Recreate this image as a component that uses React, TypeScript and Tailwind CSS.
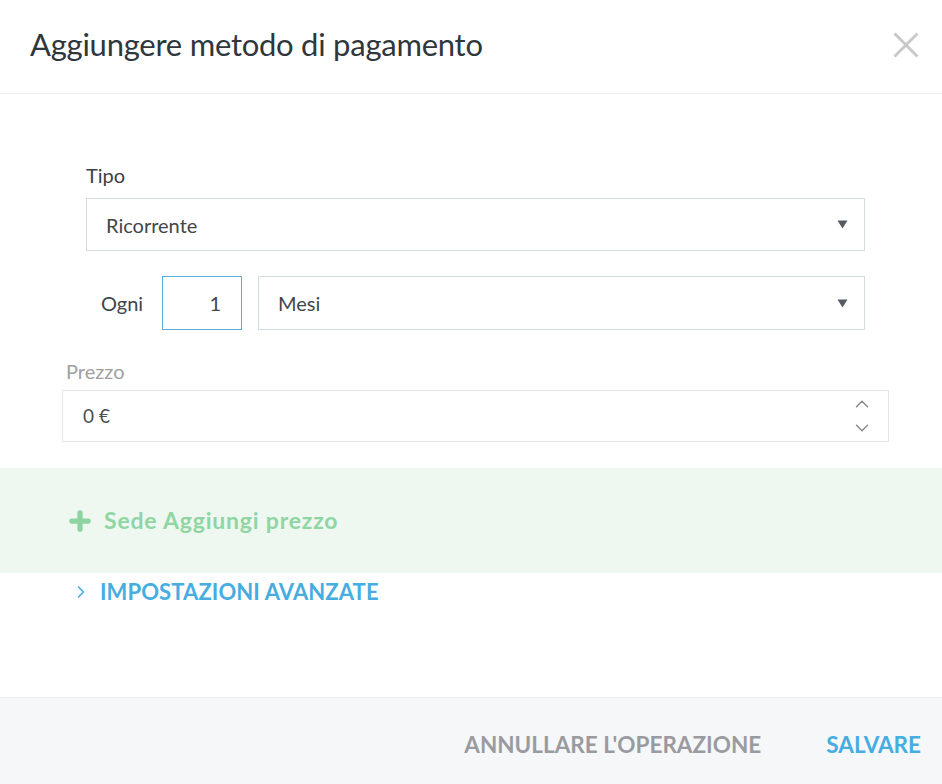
import { Plus, ChevronRight, ChevronUp, ChevronDown } from 'lucide-react';

const font = { fontFamily: 'Lato, "Open Sans", sans-serif' };

const Caret = () => (
  <svg width="11" height="9" viewBox="0 0 11 9" className="shrink-0">
    <path d="M0.5 0.5h10L5.5 8.5z" fill="#555b60" />
  </svg>
);

const App = () => {
  return (
    <div className="w-[942px] h-[784px] bg-white flex flex-col text-[#30373d]" style={font}>
      {/* Header */}
      <div className="h-[94px] shrink-0 flex items-center justify-between pl-[30px] pr-[23px] border-b border-[#efefef]">
        <h1 className="text-[31px] font-normal tracking-[-0.25px] text-[#2f363c] -mt-[4px]">Aggiungere metodo di pagamento</h1>
        <svg width="26" height="26" viewBox="0 0 26 26" className="-mt-[4px]">
          <path d="M1.5 1.5l23 23M24.5 1.5l-23 23" stroke="#c9c9c9" strokeWidth="3" />
        </svg>
      </div>

      {/* Tipo / Ogni */}
      <div className="pl-[86px] pr-[77px] pt-[69px]">
        <label className="block text-[20px] leading-[24px] text-[#3a4147]">Tipo</label>
        <div className="mt-[11px] h-[53px] border border-[#d3dde0] flex items-center justify-between pl-[19px] pr-[16px]">
          <span className="text-[20px] text-[#3f464c]">Ricorrente</span>
          <Caret />
        </div>
        <div className="mt-[25px] flex items-center">
          <span className="w-[76px] pl-[15px] text-[20px] text-[#3f464c]">Ogni</span>
          <div className="w-[80px] h-[54px] border border-[#5aaede] flex items-center justify-end pr-[20px] text-[20px] text-[#3f464c]">
            1
          </div>
          <div className="ml-[16px] flex-1 h-[54px] border border-[#d3dde0] flex items-center justify-between pl-[19px] pr-[16px]">
            <span className="text-[20px] text-[#3f464c]">Mesi</span>
            <Caret />
          </div>
        </div>
      </div>

      {/* Prezzo */}
      <div className="pl-[62px] pr-[53px] pt-[29px]">
        <label className="block pl-[4px] text-[20px] leading-[24px] text-[#a1a1a1]">Prezzo</label>
        <div className="mt-[7px] h-[52px] border border-[#e6e6e6] flex items-center justify-between pl-[20px] pr-[15px]">
          <span className="text-[19px] text-[#4a5157]">0 €</span>
          <div className="flex flex-col items-center gap-[2px] text-[#8a8a8a]">
            <ChevronUp size={22} strokeWidth={1.6} />
            <ChevronDown size={22} strokeWidth={1.6} />
          </div>
        </div>
      </div>

      {/* Aggiungi prezzo */}
      <div className="mt-[26px] h-[105px] bg-[#eef8f1] flex items-center pl-[66px] gap-[10px]">
        <Plus size={28} strokeWidth={4.5} className="text-[#8dd4a1]" />
        <span className="text-[23px] font-bold tracking-[0.8px] text-[#8fd6a3]">Sede Aggiungi prezzo</span>
      </div>

      {/* Impostazioni avanzate */}
      <div className="pl-[71px] pt-[2px] flex items-center gap-[9px] text-[#47ade1]">
        <ChevronRight size={20} strokeWidth={2} />
        <span className="text-[22px] font-bold tracking-[0.1px]">IMPOSTAZIONI AVANZATE</span>
      </div>

      {/* Footer */}
      <div className="mt-auto h-[87px] shrink-0 bg-[#f6f7f9] border-t border-[#efefef] flex items-center justify-end pr-[21px] pt-[8px] gap-[65px]">
        <span className="text-[22.5px] font-bold text-[#9a9ba0]">ANNULLARE L'OPERAZIONE</span>
        <span className="text-[22.5px] font-bold text-[#47ade1]">SALVARE</span>
      </div>
    </div>
  );
};

export default App;
